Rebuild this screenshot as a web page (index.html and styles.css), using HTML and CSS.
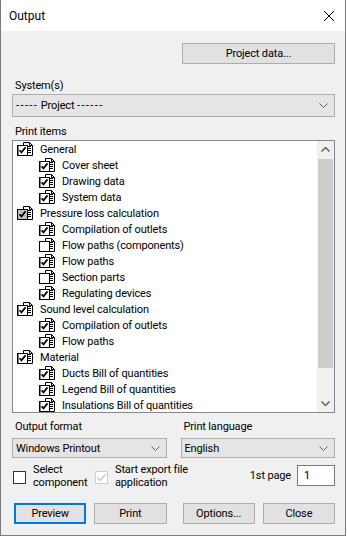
FILE: index.html
```html
<!DOCTYPE html>
<html lang="en">
<head>
    <meta charset="UTF-8">
    <title>Output</title>
    <link rel="stylesheet" href="styles.css">
</head>
<body>
    <svg class="defs" width="0" height="0">
        <symbol id="doc" viewBox="0 0 16 14">
            <path d="M6.5 0.5h6l3 3v10h-9z" fill="#fff" stroke="#000"/>
            <path d="M12.5 0.5v3h3" fill="none" stroke="#000"/>
            <path d="M10 4.5h4M10 6.5h4M10 8.5h4M10 10.5h4" stroke="#000"/>
        </symbol>
        <symbol id="item-on" viewBox="0 0 16 14">
            <use href="#doc"/>
            <rect x="0.5" y="3.5" width="10" height="10" fill="#fff" stroke="#000"/>
            <path d="M1 3.5h10M1 3.5v10" stroke="#000" stroke-width="1"/>
            <path d="M2.5 8.2l2 2.2 4-5" fill="none" stroke="#000" stroke-width="1.7"/>
        </symbol>
        <symbol id="item-part" viewBox="0 0 16 14">
            <use href="#doc"/>
            <rect x="0.5" y="3.5" width="10" height="10" fill="#c0c0c0" stroke="#000"/>
            <path d="M2.5 8.2l2 2.2 4-5" fill="none" stroke="#000" stroke-width="1.7"/>
        </symbol>
        <symbol id="item-off" viewBox="0 0 16 14">
            <use href="#doc"/>
            <rect x="0.5" y="3.5" width="10" height="10" fill="#fff" stroke="#000"/>
        </symbol>
        <symbol id="chevron" viewBox="0 0 9 5">
            <path d="M0.5 0.5l4 4 4-4" fill="none" stroke="#606060"/>
        </symbol>
    </svg>

    <div class="window">
        <div class="titlebar">
            <span class="title">Output</span>
            <svg class="close-icon" width="10" height="10" viewBox="0 0 10 10">
                <path d="M0 0l10 10M10 0l-10 10" stroke="#000" stroke-width="1"/>
            </svg>
        </div>

        <div class="content">
            <div class="top-row">
                <button class="btn btn-project">Project data...</button>
            </div>

            <div class="label">System(s)</div>
            <div class="select select-system">
                <span><span class="dashes">-----</span> Project <span class="dashes">------</span></span>
                <svg class="chevron"><use href="#chevron"/></svg>
            </div>

            <div class="label label-items">Print items</div>
            <div class="listbox">
                <ul class="tree">
                    <li class="node"><svg class="item-icon"><use href="#item-on"/></svg>General</li>
                    <li class="node child"><svg class="item-icon"><use href="#item-on"/></svg>Cover sheet</li>
                    <li class="node child"><svg class="item-icon"><use href="#item-on"/></svg>Drawing data</li>
                    <li class="node child"><svg class="item-icon"><use href="#item-on"/></svg>System data</li>
                    <li class="node"><svg class="item-icon"><use href="#item-part"/></svg>Pressure loss calculation</li>
                    <li class="node child"><svg class="item-icon"><use href="#item-on"/></svg>Compilation of outlets</li>
                    <li class="node child"><svg class="item-icon"><use href="#item-off"/></svg>Flow paths (components)</li>
                    <li class="node child"><svg class="item-icon"><use href="#item-on"/></svg>Flow paths</li>
                    <li class="node child"><svg class="item-icon"><use href="#item-off"/></svg>Section parts</li>
                    <li class="node child"><svg class="item-icon"><use href="#item-on"/></svg>Regulating devices</li>
                    <li class="node"><svg class="item-icon"><use href="#item-on"/></svg>Sound level calculation</li>
                    <li class="node child"><svg class="item-icon"><use href="#item-on"/></svg>Compilation of outlets</li>
                    <li class="node child"><svg class="item-icon"><use href="#item-on"/></svg>Flow paths</li>
                    <li class="node"><svg class="item-icon"><use href="#item-on"/></svg>Material</li>
                    <li class="node child"><svg class="item-icon"><use href="#item-on"/></svg>Ducts Bill of quantities</li>
                    <li class="node child"><svg class="item-icon"><use href="#item-on"/></svg>Legend Bill of quantities</li>
                    <li class="node child"><svg class="item-icon"><use href="#item-on"/></svg>Insulations Bill of quantities</li>
                </ul>
                <div class="scrollbar">
                    <div class="scroll-arrow">
                        <svg width="9" height="5" viewBox="0 0 9 5"><path d="M0.5 4.5l4-4 4 4" fill="none" stroke="#606060" stroke-width="1.5"/></svg>
                    </div>
                    <div class="scroll-track"><div class="scroll-thumb"></div></div>
                    <div class="scroll-arrow">
                        <svg width="9" height="5" viewBox="0 0 9 5"><path d="M0.5 0.5l4 4 4-4" fill="none" stroke="#606060" stroke-width="1.5"/></svg>
                    </div>
                </div>
            </div>

            <div class="format-row">
                <div class="format-col">
                    <div class="label">Output format</div>
                    <div class="select">
                        <span>Windows Printout</span>
                        <svg class="chevron"><use href="#chevron"/></svg>
                    </div>
                </div>
                <div class="format-col">
                    <div class="label">Print language</div>
                    <div class="select">
                        <span>English</span>
                        <svg class="chevron"><use href="#chevron"/></svg>
                    </div>
                </div>
            </div>

            <div class="options-row">
                <span class="checkbox"></span>
                <span class="check-label label-select">Select<br>component</span>
                <span class="checkbox checkbox-disabled">
                    <svg width="11" height="9" viewBox="0 0 11 9"><path d="M1 4.5l3 3 6-6.5" fill="none" stroke="#c4c4c4" stroke-width="1.2"/></svg>
                </span>
                <span class="check-label">Start export file<br>application</span>
                <span class="page-label">1st page</span>
                <span class="page-input">1</span>
            </div>

            <div class="button-row">
                <button class="btn btn-default">Preview</button>
                <button class="btn">Print</button>
                <button class="btn btn-gap">Options...</button>
                <button class="btn">Close</button>
            </div>
        </div>
    </div>
</body>
</html>
```

FILE: styles.css
```css
* {
    box-sizing: border-box;
}

body {
    margin: 0;
    font-family: Roboto, 'Noto Sans', sans-serif;
    font-size: 11px;
    letter-spacing: -0.15px;
    color: #000;
    background: #fff;
}

.defs {
    position: absolute;
    width: 0;
    height: 0;
}

.window {
    width: 346px;
    height: 536px;
    border: 1px solid #7a7a7a;
    border-top: none;
    background: #f0f0f0;
    display: flex;
    flex-direction: column;
}

.titlebar {
    height: 31px;
    background: #fff;
    display: flex;
    align-items: center;
    justify-content: space-between;
    padding: 0 11px 0 8px;
}

.title {
    font-size: 12px;
    letter-spacing: 0;
}

.content {
    padding: 12px 10px 0 11px;
    display: flex;
    flex-direction: column;
}

.top-row {
    display: flex;
    justify-content: flex-end;
}

.btn {
    font-family: inherit;
    font-size: 11px;
    letter-spacing: -0.15px;
    color: #000;
    height: 21px;
    width: 73px;
    padding: 0;
    background: #e1e1e1;
    border: 1px solid #adadad;
}

.btn-project {
    width: 153px;
}

.btn-default {
    border: 2px solid #0078d7;
}

.label {
    height: 15px;
    line-height: 15px;
    padding-left: 3px;
    margin-top: 14px;
    margin-bottom: 1px;
}

.label-items {
    margin-top: 7px;
}

.select {
    height: 23px;
    background: #e5e5e5;
    border: 1px solid #acacac;
    display: flex;
    align-items: center;
    justify-content: space-between;
    padding: 0 6px 0 3px;
}

.dashes {
    letter-spacing: 1.4px;
}

.chevron {
    width: 9px;
    height: 5px;
}

.listbox {
    height: 273px;
    background: #fff;
    border: 1px solid #828790;
    display: flex;
    overflow: hidden;
}

.tree {
    list-style: none;
    margin: 0;
    padding: 0 0 0 4px;
    flex: 1;
}

.node {
    height: 16px;
    display: flex;
    align-items: center;
    white-space: nowrap;
}

.child {
    padding-left: 22px;
}

.item-icon {
    width: 16px;
    height: 14px;
    margin-right: 7px;
    flex-shrink: 0;
}

.scrollbar {
    width: 17px;
    background: #f0f0f0;
    display: flex;
    flex-direction: column;
}

.scroll-arrow {
    height: 17px;
    display: flex;
    align-items: center;
    justify-content: center;
}

.scroll-track {
    flex: 1;
    padding: 1px 1px 0;
}

.scroll-thumb {
    height: 209px;
    background: #cdcdcd;
}

.format-row {
    display: flex;
    gap: 14px;
}

.format-col {
    flex: 1;
}

.format-row .label {
    margin-top: 6px;
    margin-bottom: 4px;
}

.format-row .select {
    height: 20px;
}

.options-row {
    display: flex;
    align-items: center;
    margin-top: 7px;
    height: 21px;
}

.checkbox {
    width: 13px;
    height: 13px;
    border: 1px solid #333;
    background: #fff;
    margin: 4px 7px 0 1px;
    display: flex;
    align-items: center;
    justify-content: center;
    flex-shrink: 0;
}

.checkbox-disabled {
    border-color: #cccccc;
    margin-left: 0;
}

.check-label {
    line-height: 13px;
}

.label-select {
    width: 62px;
}

.page-label {
    margin-left: auto;
    margin-right: 6px;
}

.page-input {
    width: 38px;
    height: 21px;
    background: #fff;
    border: 1px solid #7a7a7a;
    padding: 3px 0 0 6px;
}

.button-row {
    display: flex;
    margin-top: 17px;
    padding-left: 2px;
    gap: 8px;
}

.btn-gap {
    margin-left: 8px;
}
```
